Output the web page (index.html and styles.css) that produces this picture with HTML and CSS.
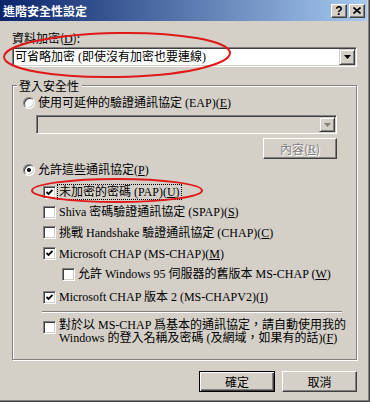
FILE: index.html
```html
<!DOCTYPE html>
<html lang="zh-Hant">
  <head>
    <meta charset="UTF-8" />
    <title>進階安全性設定</title>
    <link rel="stylesheet" href="styles.css">
  </head>
  <body>
    <div class="window">
      <div class="titlebar">
        <span class="title">進階安全性設定</span>
        <div class="tbtns">
          <span class="tbtn help">?</span>
          <span class="tbtn">
            <svg width="8" height="7" viewBox="0 0 8 7"><path d="M0.5 0.5 L7.5 6.5 M7.5 0.5 L0.5 6.5" stroke="#000" stroke-width="1.6"/></svg>
          </span>
        </div>
      </div>

      <div class="body">
        <div class="lbl">資料加密(<u>D</u>):</div>
        <div class="combo">
          <span class="val">可省略加密 (即使沒有加密也要連線)</span>
          <span class="drop"><svg width="7" height="4" viewBox="0 0 7 4"><path d="M0 0 H7 L3.5 4 Z" fill="#000"/></svg></span>
        </div>

        <fieldset class="group">
          <legend>登入安全性</legend>

          <div class="opt radio-row">
            <span class="rb"></span>
            <span>使用可延伸的驗證通訊協定 (EAP)(<u>E</u>)</span>
          </div>
          <div class="combo off">
            <span class="val"></span>
            <span class="drop"><svg width="7" height="4" viewBox="0 0 7 4"><path d="M0 0 H7 L3.5 4 Z" fill="#808080"/></svg></span>
          </div>
          <div class="btn dis props">內容(<u>R</u>)</div>

          <div class="opt radio-row r2">
            <span class="rb on"><i></i></span>
            <span>允許這些通訊協定(<u>P</u>)</span>
          </div>

          <div class="opt c1">
            <span class="cb on"><svg width="7" height="7" viewBox="0 0 7 7"><path d="M0.5 3 L2.5 5 L6.5 1" fill="none" stroke="#000" stroke-width="1.8"/></svg></span>
            <span class="focus">未加密的密碼 (PAP)(<u>U</u>)</span>
          </div>
          <div class="opt">
            <span class="cb"></span>
            <span>Shiva 密碼驗證通訊協定 (SPAP)(<u>S</u>)</span>
          </div>
          <div class="opt tall">
            <span class="cb"></span>
            <span>挑戰 Handshake 驗證通訊協定 (CHAP)(<u>C</u>)</span>
          </div>
          <div class="opt tall">
            <span class="cb on"><svg width="7" height="7" viewBox="0 0 7 7"><path d="M0.5 3 L2.5 5 L6.5 1" fill="none" stroke="#000" stroke-width="1.8"/></svg></span>
            <span>Microsoft CHAP (MS-CHAP)(<u>M</u>)</span>
          </div>
          <div class="opt sub">
            <span class="cb"></span>
            <span>允許 Windows 95 伺服器的舊版本 MS-CHAP (<u>W</u>)</span>
          </div>
          <div class="opt c6">
            <span class="cb on"><svg width="7" height="7" viewBox="0 0 7 7"><path d="M0.5 3 L2.5 5 L6.5 1" fill="none" stroke="#000" stroke-width="1.8"/></svg></span>
            <span>Microsoft CHAP 版本 2 (MS-CHAPV2)(<u>I</u>)</span>
          </div>

          <div class="sep"></div>

          <div class="opt multi">
            <span class="cb"></span>
            <span>對於以 MS-CHAP 爲基本的通訊協定，請自動使用我的<br>Windows 的登入名稱及密碼 (及網域，如果有的話)(<u>F</u>)</span>
          </div>
        </fieldset>

        <div class="actions">
          <div class="btn def">確定</div>
          <div class="btn">取消</div>
        </div>
      </div>

      <!-- hand-drawn red marks over the dialog -->
      <svg class="marks" width="370" height="402" viewBox="0 0 370 402">
        <ellipse cx="117" cy="55" rx="113" ry="22" transform="rotate(-1 117 55)" fill="none" stroke="#e01818" stroke-width="2"/>
        <ellipse cx="117" cy="190.5" rx="85" ry="11.5" fill="none" stroke="#e01818" stroke-width="2"/>
      </svg>
    </div>
  </body>
</html>
```

FILE: styles.css
```css
* {
  box-sizing: border-box;
}

body {
  margin: 0;
  background: #d4d0c8;
  color: #000;
  font: 12px/12px "Liberation Serif", "Noto Sans CJK TC", serif;
}

.window {
  position: relative;
  width: 370px;
  height: 402px;
  padding-right: 2px;
  border-right: 1px solid #404040;
  border-bottom: 1px solid #404040;
  box-shadow: inset -1px -1px #808080;
}

/* title bar */
.titlebar {
  height: 21px;
  display: flex;
  align-items: center;
  justify-content: space-between;
  padding: 0 2px 0 3px;
  background: linear-gradient(90deg, #0a246a, #a6caf0);
}

.title {
  color: #fff;
  font: bold 12px/14px "Noto Sans CJK TC", sans-serif;
}

.tbtns {
  display: flex;
  gap: 2px;
}

.tbtn {
  width: 16px;
  height: 14px;
  display: flex;
  align-items: center;
  justify-content: center;
  background: #d4d0c8;
  border: 1px solid;
  border-color: #fff #404040 #404040 #fff;
  box-shadow: inset -1px -1px #808080;
}

.tbtn.help {
  font: bold 12px/12px "Liberation Sans", sans-serif;
}

/* dialog body */
.body {
  padding: 0 10px 0 12px;
}

.lbl {
  margin-top: 11px;
  height: 12px;
  font-family: "Noto Sans CJK TC", sans-serif;
}

.lbl u,
.opt u,
.btn u {
  font-family: "Liberation Serif", serif;
}

.combo {
  margin-top: 3px;
  height: 20px;
  padding: 1px;
  display: flex;
  align-items: center;
  justify-content: space-between;
  background: #fff;
  border: 1px solid;
  border-color: #808080 #fff #fff #808080;
  box-shadow: inset 1px 1px #404040, inset -1px -1px #d4d0c8;
}

.combo .val {
  padding-left: 1px;
}

.drop {
  width: 16px;
  height: 16px;
  flex: none;
  display: flex;
  align-items: center;
  justify-content: center;
  background: #d4d0c8;
  border: 1px solid;
  border-color: #d4d0c8 #404040 #404040 #d4d0c8;
  box-shadow: inset 1px 1px #fff, inset -1px -1px #808080;
}

.combo.off {
  margin: 5px 0 0 19px;
  width: 301px;
  height: 19px;
  background: #d4d0c8;
}

.combo.off .drop {
  height: 15px;
}

/* group box */
.group {
  margin: 12px 0 0;
  min-width: 0;
  padding: 4px 0 14px 4px;
  border: 1px solid #808080;
  box-shadow: inset 1px 1px #fff, 1px 1px #fff;
}

.group legend {
  padding: 0 3px 0 2px;
  line-height: 13px;
  background: #d4d0c8;
  font-family: "Noto Sans CJK TC", sans-serif;
}

.opt {
  display: flex;
  align-items: center;
  gap: 3px;
  height: 20px;
  margin-left: 26px;
  white-space: nowrap;
}

.opt.radio-row {
  height: 14px;
  margin-left: 6px;
}

.opt.r2 {
  margin-top: 4px;
}

.opt.c1 {
  margin-top: 5px;
}

.opt.tall {
  height: 21px;
}

.opt.sub {
  margin-left: 45px;
}

.opt.c6 {
  margin-top: 3px;
}

.opt.multi {
  height: auto;
  margin-top: 6px;
  align-items: flex-start;
  line-height: 13px;
}

.opt.multi .cb {
  margin-top: 2px;
}

.focus {
  outline: 1px dotted #000;
  outline-offset: 1px;
}

.rb {
  width: 12px;
  height: 12px;
  flex: none;
  display: flex;
  align-items: center;
  justify-content: center;
  border-radius: 50%;
  background: #fff;
  border: 1px solid;
  border-color: #808080 #fff #fff #808080;
  box-shadow: inset 1px 1px #404040, inset -1px -1px #d4d0c8;
}

.rb.on i {
  width: 4px;
  height: 4px;
  border-radius: 50%;
  background: #000;
}

.cb {
  width: 13px;
  height: 13px;
  flex: none;
  display: flex;
  align-items: center;
  justify-content: center;
  background: #fff;
  border: 1px solid;
  border-color: #808080 #fff #fff #808080;
  box-shadow: inset 1px 1px #404040, inset -1px -1px #d4d0c8;
}

.sep {
  margin: 4px 0 0 25px;
  width: 300px;
  height: 2px;
  border-top: 1px solid #808080;
  border-bottom: 1px solid #fff;
}

/* push buttons */
.btn {
  width: 75px;
  height: 21px;
  display: flex;
  align-items: center;
  justify-content: center;
  font-family: "Noto Sans CJK TC", sans-serif;
  background: #d4d0c8;
  border: 1px solid;
  border-color: #fff #404040 #404040 #fff;
  box-shadow: inset -1px -1px #808080;
}

.btn.def {
  width: 76px;
  border: 1px solid #000;
  box-shadow: inset 1px 1px #fff, inset -1px -1px #404040, inset -2px -2px #808080;
}

.btn.dis {
  color: #808080;
  text-shadow: 1px 1px #fff;
}

.btn.props {
  margin: 4px 0 0 246px;
  width: 74px;
}

.actions {
  display: flex;
  justify-content: flex-end;
  gap: 7px;
  margin-top: 11px;
}

.marks {
  position: absolute;
  top: 0;
  left: 0;
  pointer-events: none;
}
```
